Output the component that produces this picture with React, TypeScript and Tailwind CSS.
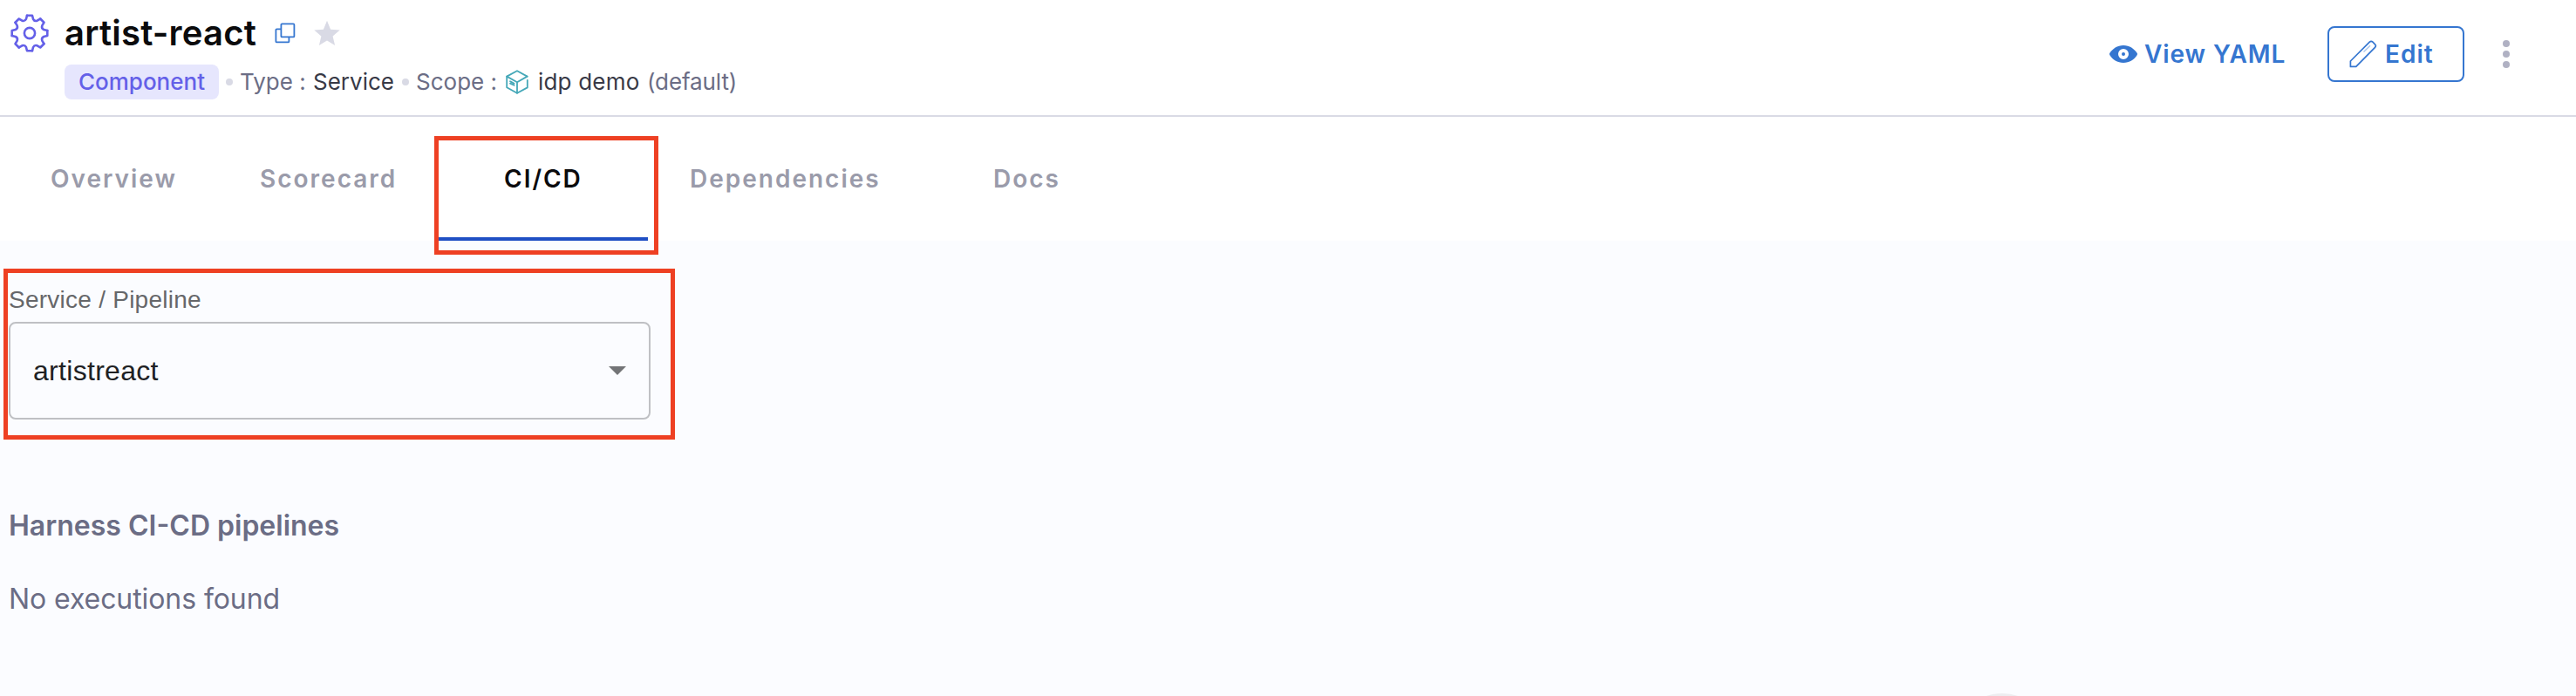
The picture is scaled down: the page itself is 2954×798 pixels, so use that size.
import React from "react";

const gearAngles = [0, 45, 90, 135, 180, 225, 270, 315];

function GearIcon() {
  return (
    <svg className="h-[44px] w-[44px] shrink-0" viewBox="-22 -22 44 44" fill="none" stroke="#6460e8" strokeWidth="2.6" strokeLinejoin="round" strokeLinecap="round">
      {gearAngles.map((angle) => (
        <path key={angle} transform={`rotate(${angle})`} d="M-3-20.300H3L4-16.200Q5.500-13.200 8.630-14.290L12.230-16.470" />
      ))}
      <circle r="6.1" />
    </svg>
  );
}

function CopyIcon() {
  return (
    <svg className="h-[24px] w-[24px] shrink-0" viewBox="0 0 24 24" fill="none" stroke="#3576d0" strokeWidth="1.8">
      <rect x="7.4" y="1.4" width="15" height="15" rx="1" />
      <path d="M7.4 7.4H2.4a1 1 0 0 0-1 1v13a1 1 0 0 0 1 1h13a1 1 0 0 0 1-1v-5" />
    </svg>
  );
}

function StarIcon() {
  return (
    <svg className="h-[30px] w-[30px] shrink-0" viewBox="0 0 30 30" fill="#d9dae5">
      <path d="M15 0.8l4.1 9.9 10.6.9-8.1 6.9 2.5 10.4L15 23.4l-9.1 5.5 2.5-10.4-8.1-6.9 10.6-.9z" />
    </svg>
  );
}

function CubeIcon() {
  return (
    <svg className="h-[28px] w-[26px] shrink-0" viewBox="0 0 26 28" fill="none" stroke="#45a8b8" strokeWidth="1.8" strokeLinejoin="round" strokeLinecap="round">
      <path d="M24.6 7.6L13 1.2 1.2 7.6v12.6L13 26.8l11.8-6.4V11.8" />
      <path d="M1.2 7.6L13 14.2l11.6-6.6M13 14.2v12.6" />
      <path d="M5 13.2l1.6.9M5 15.6l4.6 2.2M6.6 14.100l3 1.600" />
    </svg>
  );
}

function EyeIcon() {
  return (
    <svg className="h-[20px] w-[32px] shrink-0" viewBox="0 0 32 20">
      <path fillRule="evenodd" fill="#3576d0" d="M16 0C9 0 3.500 4 .4 8.800a2.200 2.200 0 0 0 0 2.400C3.500 16 9 20 16 20s12.500-4 15.600-8.800a2.200 2.200 0 0 0 0-2.400C28.500 4 23 0 16 0zm0 4a6 6 0 1 1 0 12 6 6 0 0 1 0-12z" />
      <circle cx="16" cy="10" r="2" fill="#3576d0" />
    </svg>
  );
}

function PencilIcon() {
  return (
    <svg className="h-[32px] w-[32px] shrink-0" viewBox="0 0 32 32" fill="none" stroke="#3576d0" strokeWidth="1.7" strokeLinejoin="round">
      <path d="M1.400 30.400V24L23.300 2.200a2.600 2.600 0 0 1 3.600 0l2.600 2.600a2.600 2.600 0 0 1 0 3.600L7.800 30.400z" />
      <path d="M16.500 13.400l7.500-7.200" stroke="#a9c6ec" strokeWidth="1.400" />
    </svg>
  );
}

function Dot({ className }: { className: string }) {
  return <span className={`h-[8px] w-[8px] shrink-0 rounded-full bg-[#d9dae5] ${className}`} />;
}

function Header() {
  return (
    <header className="flex h-[134px] justify-between border-b-2 border-[#d9dae5] bg-white">
      <div className="flex pl-[12px]">
        <div className="w-[62px] pt-[16px]">
          <GearIcon />
        </div>
        <div>
          <div className="flex h-[60px] items-center pt-[15px]">
            <h1 className="w-[241px] text-[40px] leading-[45px] font-semibold tracking-[0.2px] text-[#0b0b0d]">artist-react</h1>
            <CopyIcon />
            <span className="ml-[21px]">
              <StarIcon />
            </span>
          </div>
          <div className="mt-[14px] flex h-[40px] items-center text-[26px] leading-[40px] whitespace-nowrap text-[#6b6d85]">
            <span className="h-[40px] w-[177px] shrink-0 rounded-[8px] bg-[#e6e6fd] text-center font-medium text-[#6460e8]">Component</span>
            <Dot className="ml-[8px]" />
            <span className="ml-[8px] w-[84px]">Type :</span>
            <span className="w-[95px] text-[#383946]">Service</span>
            <Dot className="ml-[7px]" />
            <span className="ml-[8px] w-[103px]">Scope :</span>
            <CubeIcon />
            <span className="ml-[11px] w-[125px] tracking-[0.2px] text-[#383946]">idp demo</span>
            <span className="tracking-[-0.1px]">(default)</span>
          </div>
        </div>
      </div>
      <div className="flex h-[124px] items-center pr-[76px] text-[28px] leading-[40px] font-semibold whitespace-nowrap text-[#3576d0]">
        <EyeIcon />
        <span className="ml-[8px] w-[210px] tracking-[0.9px]">View YAML</span>
        <button className="flex h-[64px] w-[157px] items-center rounded-[8px] border-2 border-[#3576d0] pl-[23px]">
          <PencilIcon />
          <span className="ml-[9px] tracking-[1px]">Edit</span>
        </button>
        <div className="ml-[44px] flex flex-col gap-[4px]">
          <span className="h-[8px] w-[8px] rounded-full bg-[#b0b1c3]" />
          <span className="h-[8px] w-[8px] rounded-full bg-[#b0b1c3]" />
          <span className="h-[8px] w-[8px] rounded-full bg-[#b0b1c3]" />
        </div>
      </div>
    </header>
  );
}

function Tabs() {
  return (
    <nav className="flex h-[142px] bg-white pl-[58px] text-[28px] leading-[142px] font-semibold tracking-[2px] whitespace-nowrap text-[#9a9baa]">
      <span className="w-[240px]">Overview</span>
      <span className="w-[200px]">Scorecard</span>
      <div className="relative w-[245px] pl-[80px] text-[#0b0b0d]">
        CI/CD
        <span className="absolute bottom-0 left-[5px] h-[4px] w-[240px] bg-[#1f4fc4]" />
        <span className="absolute top-[22px] left-0 h-[136px] w-[257px] border-[5px] border-[#ee4023]" />
      </div>
      <span className="w-[347px] pl-[48px]">Dependencies</span>
      <span className="pl-[49px]">Docs</span>
    </nav>
  );
}

export default function App() {
  return (
    <div className="flex h-[798px] w-full flex-col overflow-hidden bg-[#fbfcff] font-['Inter',sans-serif]">
      <Header />
      <Tabs />
      <main className="relative flex-1 overflow-hidden">
        <section className="mt-[32px] ml-[4px] h-[196px] w-[770px] border-[5px] border-[#ee4023] pl-px font-['Liberation_Sans',Arial,sans-serif]">
          <div className="mt-[11px] h-[45px] text-[28px] leading-[40px] tracking-[0.25px] text-[#66676a]">Service / Pipeline</div>
          <div className="flex h-[112px] w-[736px] items-center justify-between rounded-[8px] border-2 border-[#bfc0c4] pr-[26px] pl-[26px] text-[32px] leading-[40px] text-[#202124]">
            <span className="tracking-[0.3px]">artistreact</span>
            <svg className="h-[10px] w-[20px]" viewBox="0 0 20 10" fill="#737477">
              <path d="M0 0h20L10 10z" />
            </svg>
          </div>
        </section>
        <h2 className="mt-[79px] ml-[10px] text-[32px] leading-[40px] font-semibold text-[#6b6d85]">Harness CI-CD pipelines</h2>
        <p className="mt-[44px] ml-[10px] text-[32px] leading-[40px] tracking-[-0.08px] text-[#6b6d85]">No executions found</p>
        <span className="absolute top-[519px] left-[2240px] h-[112px] w-[112px] rounded-full bg-[#ededf0]" />
      </main>
    </div>
  );
}
